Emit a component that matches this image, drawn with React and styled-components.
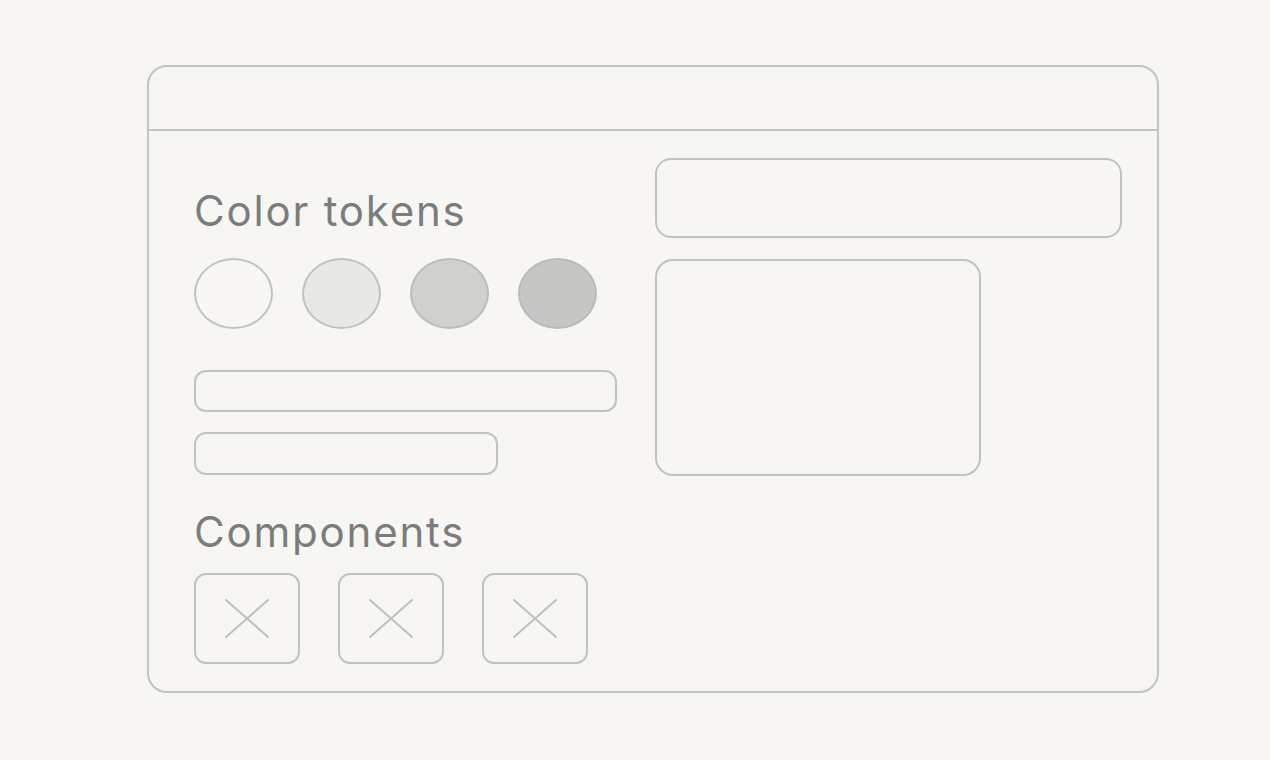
import React from 'react';
import styled, { createGlobalStyle } from 'styled-components';

const GlobalStyle = createGlobalStyle`
  html, body {
    margin: 0;
    padding: 0;
    background: #f7f6f3;
  }
  body {
    font-family: Inter, "Noto Sans", sans-serif;
  }
`;

const Page = styled.div`
  width: 1270px;
  height: 760px;
  box-sizing: border-box;
  padding: 65px 0 0 147px;
  background: #f7f6f3;
`;

const Window = styled.div`
  width: 1012px;
  height: 628px;
  box-sizing: border-box;
  border: 2px solid #c3c3c0;
  border-radius: 20px;
  display: flex;
  flex-direction: column;
`;

const TitleBar = styled.div`
  height: 62px;
  border-bottom: 2px solid #c3c3c0;
`;

const Body = styled.div`
  display: flex;
  align-items: flex-start;
  gap: 39px;
  padding: 27px 35px 0 45px;
`;

const LeftCol = styled.div`
  width: 422px;
  display: flex;
  flex-direction: column;
  padding-top: 32px;
`;

const Heading = styled.h2`
  margin: 0 0 ${p => p.$after}px;
  font-family: Inter, "Noto Sans", sans-serif;
  font-weight: 400;
  font-size: 42px;
  line-height: 42px;
  letter-spacing: 1.8px;
  color: #7a7d7c;
`;

const Swatches = styled.div`
  display: flex;
  gap: 29px;
  margin-bottom: 41px;
`;

const Swatch = styled.div`
  width: 79px;
  height: 71px;
  box-sizing: border-box;
  border-radius: 50%;
  border: 2.5px solid ${p => p.$line};
  background: ${p => p.$fill};
`;

const Bar = styled.div`
  width: ${p => p.$w}px;
  height: ${p => p.$h}px;
  box-sizing: border-box;
  border: 2px solid #c2c2bf;
  border-radius: ${p => p.$r || 12}px;
  margin-bottom: ${p => p.$after || 0}px;
`;

const Tiles = styled.div`
  display: flex;
  gap: 38px;
`;

const Tile = styled.div`
  width: 106px;
  height: 91px;
  box-sizing: border-box;
  border: 2px solid #c2c2bf;
  border-radius: 12px;
  display: flex;
  align-items: center;
  justify-content: center;
`;

const RightCol = styled.div`
  width: 467px;
  display: flex;
  flex-direction: column;
  gap: 21px;
`;

const swatches = [
  { fill: '#f8f7f5', line: '#c2c2c0' },
  { fill: '#e8e8e5', line: '#c1c1be' },
  { fill: '#d0d0cd', line: '#bcbcb9' },
  { fill: '#c6c6c4', line: '#bababa' },
];

const Cross = () => (
  <svg width="46" height="41" viewBox="0 0 46 41">
    <path d="M2 2 L44 39 M44 2 L2 39" stroke="#c0c0bd" strokeWidth="2" strokeLinecap="round" fill="none" />
  </svg>
);

export default function App() {
  return (
    <Page>
      <GlobalStyle />
      <Window>
        <TitleBar />
        <Body>
          <LeftCol>
            <Heading $after={26}>Color tokens</Heading>
            <Swatches>
              {swatches.map((s, i) => (
                <Swatch key={i} $fill={s.fill} $line={s.line} />
              ))}
            </Swatches>
            <Bar $w={423} $h={42} $after={20} />
            <Bar $w={304} $h={43} $after={36} />
            <Heading $after={20}>Components</Heading>
            <Tiles>
              {[0, 1, 2].map(i => (
                <Tile key={i}>
                  <Cross />
                </Tile>
              ))}
            </Tiles>
          </LeftCol>
          <RightCol>
            <Bar $w={467} $h={80} $r={16} />
            <Bar $w={326} $h={217} $r={18} />
          </RightCol>
        </Body>
      </Window>
    </Page>
  );
}
